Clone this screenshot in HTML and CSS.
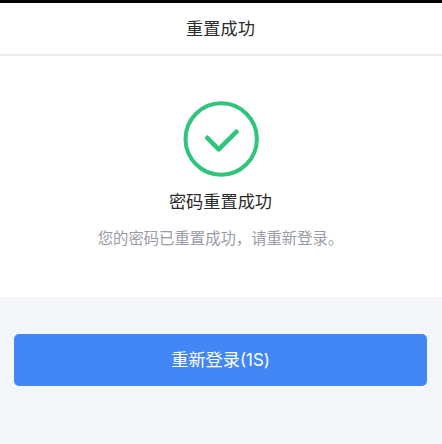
FILE: index.html
```html
<!DOCTYPE html>
<html lang="zh-CN">
<head>
<meta charset="UTF-8">
<title>重置成功</title>
<link rel="stylesheet" href="styles.css">
</head>
<body>
<div class="page">
  <header class="header"><h1 class="title">重置成功</h1></header>
  <main class="result">
    <svg class="check" viewBox="0 0 76 76" fill="none" stroke="currentColor" stroke-width="4">
      <circle cx="38.200" cy="38" r="35.700"/>
      <path d="M24.300 36.800 35.700 48.300 53.500 30.700" stroke-width="4.600" stroke-linecap="round" stroke-linejoin="round"/>
    </svg>
    <h2 class="heading">密码重置成功</h2>
    <p class="hint">您的密码已重置成功，请重新登录。</p>
  </main>
  <footer class="actions"><button class="login" type="button">重新登录<span class="countdown">(1S)</span></button></footer>
</div>
</body>
</html>
```
FILE: styles.css
```css
* { box-sizing: border-box; margin: 0; }
body { font-family: "Noto Sans CJK SC", sans-serif; background: #f4f6fa; }
.page { height: 444px; border-top: 3px solid #000; display: flex; flex-direction: column; }
.header { height: 53px; padding: 0 1px 2px 0; background: #fff; border-bottom: 2px solid #ebebeb; display: flex; align-items: center; justify-content: center; }
.title { font-size: 17.2px; line-height: 25px; font-weight: 400; color: #2b2b2b; }
.result { height: 241px; padding: 45px 1px 0 0; background: #fff; display: flex; flex-direction: column; align-items: center; }
.check { width: 76px; height: 76px; color: #31c47c; flex: none; }
.heading { margin-top: 11px; font-size: 17.2px; line-height: 26px; font-weight: 400; color: #2b2b2b; }
.hint { margin-top: 12px; font-size: 15.35px; line-height: 22px; color: #999ca5; white-space: nowrap; }
.actions { flex: 1; padding: 37px 15px 0 14px; background: #f4f6fa; }
.login { display: block; width: 100%; height: 52px; padding: 0 0 1px; border: 0; border-radius: 5px; background: #4387f7; color: #fff; font: 400 17.2px/26px "Noto Sans CJK SC", sans-serif; }
.countdown { font-family: Inter, sans-serif; font-size: 16.8px; }
```
